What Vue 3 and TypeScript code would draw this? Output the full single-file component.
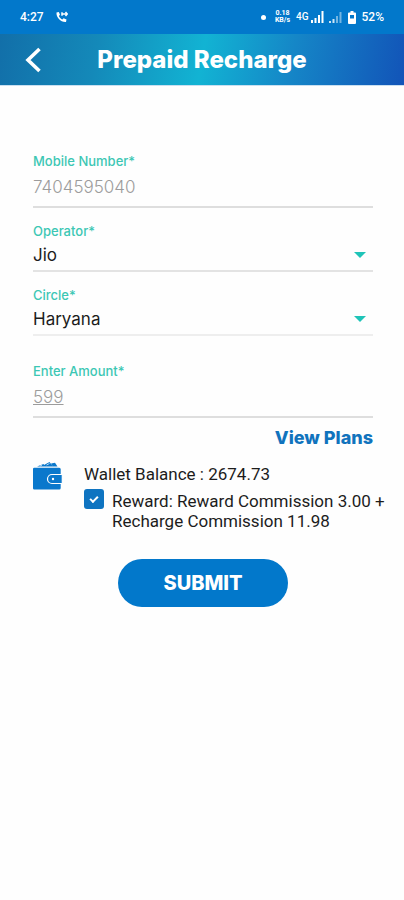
<script setup lang="ts">
import { ref } from 'vue'

const mobile = ref('7404595040')
const operator = ref('Jio')
const circle = ref('Haryana')
const amount = ref('599')
const useReward = ref(true)
</script>

<template>
  <div class="screen">
    <div class="status">
      <span class="clock">4:27</span>
      <svg class="call" viewBox="0 0 12 12" aria-hidden="true">
        <path d="M.5 1.500 2.800 1l1.200 2.800-1.100 1.100c.7 1.600 1.900 2.800 3.500 3.600l1.200-1.200L10.500 8.600 10 11C5 11.500 0 6.500.5 1.500Z" fill="#fff" />
        <path d="M6 3h5M6 1.200v3.600M9.500 1 11.300 3 9.500 5" fill="none" stroke="#fff" stroke-width="1.500" />
      </svg>
      <span class="spacer"></span>
      <span class="dot"></span>
      <span class="rate"><span>0.18</span><span>KB/s</span></span>
      <span class="net">4G</span>
      <svg class="signal" viewBox="0 0 13 12" aria-hidden="true">
        <path d="M0 9h2v3H0zM3.500 7h2v5h-2zM7 4h2v8H7zM10.500 0h2v12h-2z" fill="#fff" />
      </svg>
      <svg class="signal second" viewBox="0 0 13 12" aria-hidden="true">
        <path d="M0 10h2v2H0zM3.500 8h2v4h-2z" fill="#fff" opacity=".8" />
        <path d="M7 5h2v7H7zM10.500 1h2v11h-2z" fill="#fff" opacity=".45" />
      </svg>
      <svg class="battery" viewBox="0 0 8 13" aria-hidden="true">
        <path d="M2.500 0h3v1.500H7a1 1 0 0 1 1 1V12a1 1 0 0 1-1 1H1a1 1 0 0 1-1-1V2.500a1 1 0 0 1 1-1h1.500ZM2 4v3.500h4V4Z" fill="#fff" fill-rule="evenodd" />
      </svg>
      <span class="percent">52%</span>
    </div>

    <header class="bar">
      <button class="back" type="button" aria-label="Back">
        <svg viewBox="0 0 16 26" aria-hidden="true">
          <path d="M14.500 2 3 13 14.500 24" fill="none" stroke="#fff" stroke-width="3.600" />
        </svg>
      </button>
      <h1>Prepaid Recharge</h1>
    </header>

    <form class="form" @submit.prevent>
      <div class="field">
        <label for="mobile">Mobile Number*</label>
        <input id="mobile" v-model="mobile" type="tel" />
      </div>
      <div class="field">
        <label for="operator">Operator*</label>
        <div class="pick">
          <select id="operator" v-model="operator">
            <option>Jio</option>
          </select>
          <svg class="caret" viewBox="0 0 12 6" aria-hidden="true"><path d="M0 0h12L6 6Z" fill="#1fc4b8" /></svg>
        </div>
      </div>
      <div class="field">
        <label for="circle">Circle*</label>
        <div class="pick faint">
          <select id="circle" v-model="circle">
            <option>Haryana</option>
          </select>
          <svg class="caret" viewBox="0 0 12 6" aria-hidden="true"><path d="M0 0h12L6 6Z" fill="#1fc4b8" /></svg>
        </div>
      </div>
      <div class="field amount">
        <label for="amount">Enter Amount*</label>
        <input id="amount" v-model="amount" type="text" inputmode="numeric" />
      </div>

      <a class="plans" href="#plans">View Plans</a>

      <section class="wallet">
        <svg class="wallet-icon" viewBox="0 0 30 28" aria-hidden="true">
          <path d="M4 4.500 10.500 2l1.500 2.500ZM11 3l5.500-3 3.500 4.500h-8ZM18 1.500l4-.8 2.500 3.800H20Z" fill="#0a78cc" />
          <path d="m13.500 3 3-1.500M7 4l2-.8" stroke="#fff" stroke-width=".7" />
          <path d="M1.200 5.800h25a1.500 1.500 0 0 1 1.500 1.500V26a1.500 1.500 0 0 1-1.500 1.500h-25A1.200 1.200 0 0 1 0 26.300V7a1.200 1.200 0 0 1 1.200-1.200Z" fill="#0a78cc" />
          <path d="M29.300 12.500H19a4.500 4.500 0 0 0 0 9h10.300Z" fill="#0a78cc" stroke="#fff" stroke-width="1.200" />
          <circle cx="20" cy="17" r="1.200" fill="#fff" />
        </svg>
        <div class="details">
          <p>Wallet Balance : 2674.73</p>
          <div class="reward">
            <input id="reward" v-model="useReward" type="checkbox" />
            <label for="reward">Reward: Reward Commission 3.00 + Recharge Commission 11.98</label>
          </div>
        </div>
      </section>

      <button class="submit" type="submit">SUBMIT</button>
    </form>
  </div>
</template>

<style>
body {
  margin: 0;
  background: #fefefe;
}
</style>

<style scoped>
.screen {
  min-height: 100vh;
  background: #fefefe;
  color: #1c1c1c;
  font-family: Inter, Roboto, sans-serif;
}
.status {
  display: flex;
  align-items: center;
  box-sizing: border-box;
  height: 34px;
  padding: 0 20px;
  background: #0278cb;
  color: #fff;
  font: 500 12px/16px Roboto, sans-serif;
}
.call {
  width: 12px;
  height: 12px;
  margin-left: 12px;
}
.spacer {
  flex: 1;
}
.dot {
  width: 5px;
  height: 5px;
  border-radius: 50%;
  background: #fff;
}
.rate {
  display: flex;
  flex-direction: column;
  margin-left: 9px;
  font-size: 7px;
  font-weight: 700;
  line-height: 7px;
  text-align: center;
}
.net {
  margin-left: 6px;
  font-size: 10px;
}
.signal {
  width: 13px;
  height: 12px;
  margin-left: 2px;
}
.second {
  margin-left: 5px;
}
.battery {
  width: 8px;
  height: 13px;
  margin: 0 6px;
}
.bar {
  display: flex;
  align-items: center;
  justify-content: center;
  position: relative;
  height: 51px;
  border-bottom: 1px solid #c9dff0;
  background: linear-gradient(100deg, #126fa9 0%, #1489b9 24%, #12b3d3 50%, #1586c7 72%, #1254b8 100%);
  color: #fff;
}
.back {
  position: absolute;
  left: 16px;
  padding: 0 9px;
  border: 0;
  background: none;
}
.back svg {
  display: block;
  width: 16px;
  height: 26px;
}
h1 {
  margin: 0;
  font-size: 24px;
  font-weight: 800;
  line-height: 28px;
}
.form {
  display: flex;
  flex-direction: column;
  padding: 66px 31px 32px 33px;
}
.field {
  display: flex;
  flex-direction: column;
  margin-bottom: 14px;
}
.field label {
  color: #3cc7b4;
  font-size: 13px;
  font-weight: 500;
  line-height: 18px;
}
.field input {
  box-sizing: border-box;
  width: 100%;
  height: 38px;
  padding: 0 0 2px;
  border: 0;
  border-bottom: 2px solid #dedede;
  border-radius: 0;
  outline: none;
  background: none;
  color: #9c9c9c;
  font: 300 17px/24px Inter, Roboto, sans-serif;
}
.pick {
  display: flex;
  align-items: center;
  position: relative;
  border-bottom: 2px solid #e3e3e3;
}
.faint {
  border-bottom-color: #eeeeee;
}
select {
  width: 100%;
  height: 30px;
  padding: 0;
  border: 0;
  appearance: none;
  outline: none;
  background: none;
  color: #1c1c1c;
  font: 400 17px/24px Inter, Roboto, sans-serif;
}
.caret {
  position: absolute;
  right: 7px;
  width: 12px;
  height: 6px;
  pointer-events: none;
}
.amount {
  margin-top: 12px;
  margin-bottom: 8px;
}
.amount input {
  text-decoration: underline;
}
.plans {
  align-self: flex-end;
  color: #1173bd;
  font-size: 18px;
  font-weight: 800;
  line-height: 24px;
  text-decoration: none;
}
.wallet {
  display: flex;
  gap: 21px;
  margin: 12px -16px 0 0;
  font: 400 17px/20px Roboto, sans-serif;
}
.wallet-icon {
  flex: none;
  width: 30px;
  height: 28px;
}
.details {
  flex: 1;
}
.wallet p {
  margin: 2px 0 7px;
}
.reward {
  display: flex;
  gap: 8px;
}
.reward input {
  flex: none;
  display: grid;
  place-items: center;
  width: 20px;
  height: 20px;
  margin: -2px 0 0;
  border-radius: 3px;
  appearance: none;
  background: #e2e2e2;
}
.reward input:checked {
  background: #0f74c1;
}
.reward input:checked::before {
  content: '';
  width: 6px;
  height: 3px;
  margin-bottom: 2px;
  border: solid #fff;
  border-width: 0 0 2px 2px;
  transform: rotate(-45deg);
}
.submit {
  align-self: center;
  width: 50%;
  height: 48px;
  margin-top: 28px;
  border: 0;
  border-radius: 24px;
  background: #0278cb;
  color: #fff;
  font: 800 20px/24px Inter, Roboto, sans-serif;
}
</style>
